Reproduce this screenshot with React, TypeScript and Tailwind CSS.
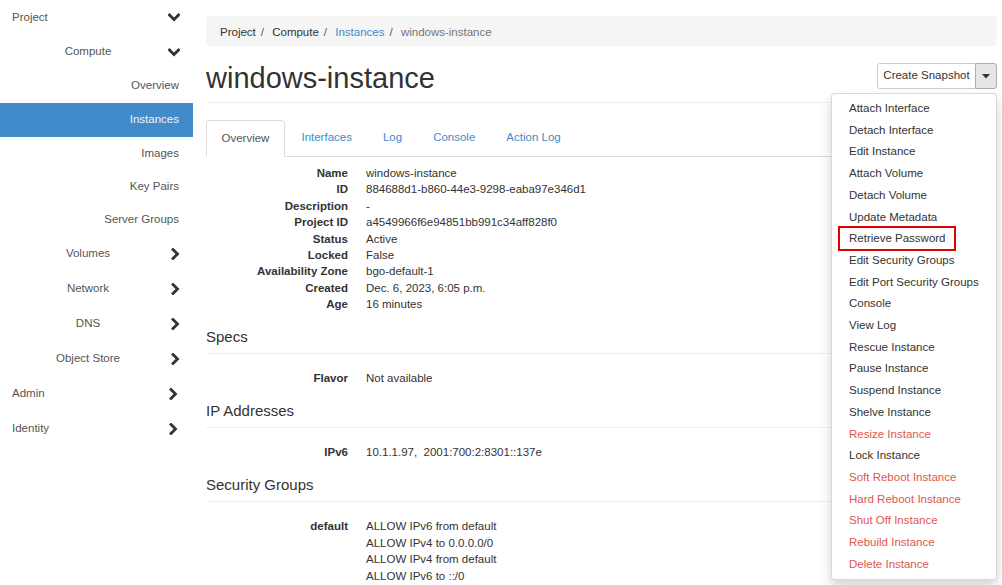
import React from "react";

const ChevDown = () => (
  <svg width="12" height="9" viewBox="0 0 12 9" className="block">
    <polyline points="1.5,2 6,6.5 10.5,2" fill="none" stroke="#333" strokeWidth="2.8" strokeLinecap="square" />
  </svg>
);
const ChevRight = () => (
  <svg width="9" height="12" viewBox="0 0 9 12" className="block">
    <polyline points="2,1.5 6.5,6 2,10.5" fill="none" stroke="#333" strokeWidth="2.8" strokeLinecap="square" />
  </svg>
);

function Sidebar() {
  const leaf = (label: string, h: string, active = false) => (
    <div
      className={`${h} flex items-center justify-end pr-[14px] ${active ? "bg-[#418bca] text-[#eef4fa]" : "text-[#555]"}`}
    >
      {label}
    </div>
  );
  const mid = (label: string, h: string, down = false) => (
    <div className={`${h} flex items-center text-[#555]`}>
      <div className="w-[176px] text-center">{label}</div>
      <div className={down ? "-ml-[8px]" : "-ml-[5px]"}>{down ? <ChevDown /> : <ChevRight />}</div>
    </div>
  );
  const top = (label: string, h: string, down = false) => (
    <div className={`${h} flex items-center justify-between pl-[12px] pr-[13px] text-[#555]`}>
      <span>{label}</span>
      {down ? <ChevDown /> : <span className="pr-[2px]"><ChevRight /></span>}
    </div>
  );
  return (
    <div className="w-[193px] shrink-0 text-[11.5px]">
      {top("Project", "h-[35px]", true)}
      {mid("Compute", "h-[34px]", true)}
      {leaf("Overview", "h-[34px]")}
      {leaf("Instances", "h-[34px]", true)}
      {leaf("Images", "h-[33px]")}
      {leaf("Key Pairs", "h-[33px]")}
      {leaf("Server Groups", "h-[33px]")}
      {mid("Volumes", "h-[35px]")}
      {mid("Network", "h-[35px]")}
      {mid("DNS", "h-[35px]")}
      {mid("Object Store", "h-[35px]")}
      {top("Admin", "h-[35px]")}
      {top("Identity", "h-[35px]")}
    </div>
  );
}

const menuItems: [string, boolean][] = [
  ["Attach Interface", false],
  ["Detach Interface", false],
  ["Edit Instance", false],
  ["Attach Volume", false],
  ["Detach Volume", false],
  ["Update Metadata", false],
  ["Retrieve Password", false],
  ["Edit Security Groups", false],
  ["Edit Port Security Groups", false],
  ["Console", false],
  ["View Log", false],
  ["Rescue Instance", false],
  ["Pause Instance", false],
  ["Suspend Instance", false],
  ["Shelve Instance", false],
  ["Resize Instance", true],
  ["Lock Instance", false],
  ["Soft Reboot Instance", true],
  ["Hard Reboot Instance", true],
  ["Shut Off Instance", true],
  ["Rebuild Instance", true],
  ["Delete Instance", true],
];

function ActionButton() {
  return (
    <div className="relative mt-[1px] flex">
      <div className="h-[26px] w-[99px] flex items-center justify-center border border-[#ccc] rounded-l-[3px] bg-white text-[11.5px] text-[#333]">
        Create Snapshot
      </div>
      <div className="h-[26px] w-[22px] -ml-px flex items-center justify-center border border-[#adadad] rounded-r-[3px] bg-[#e6e6e6]">
        <svg width="8" height="5" viewBox="0 0 8 5"><polygon points="0,0 8,0 4,4.5" fill="#333" /></svg>
      </div>
      <div className="absolute right-0 top-full mt-[4px] w-[166px] z-10 bg-white border border-[rgba(0,0,0,0.15)] rounded-[4px] shadow-[0_6px_12px_rgba(0,0,0,0.175)] py-[4px] text-[11.5px]">
        {menuItems.map(([label, danger]) => (
          <div
            key={label}
            className={`relative leading-[21.7px] px-[17px] whitespace-nowrap ${danger ? "text-[#e05650]" : "text-[#333]"}`}
          >
            {label}
            {label === "Retrieve Password" && (
              <div className="absolute left-[6px] top-[-2px] w-[118px] h-[25px] border-2 border-[#e00000]" />
            )}
          </div>
        ))}
      </div>
    </div>
  );
}

function Row({ k, v }: { k: string; v: React.ReactNode }) {
  return (
    <div className="flex leading-[16.4px]">
      <div className="w-[142px] text-right font-bold text-[#333]">{k}</div>
      <div className="ml-[18px] text-[#333]">{v}</div>
    </div>
  );
}

function Section({ title, first = false }: { title: string; first?: boolean }) {
  return (
    <div className={`${first ? "mt-[15px]" : "mt-[16px]"} text-[15px] leading-[17px] pb-[8px] border-b border-[#eee] text-[#333]`}>{title}</div>
  );
}

export default function App() {
  return (
    <div className="w-[1002px] h-[585px] overflow-hidden bg-white flex font-['Liberation_Sans',Arial,sans-serif] text-[#333]">
      <Sidebar />
      <div className="flex-1 pl-[13px] pr-[5px] text-[11.5px]">
        <div className="mt-[16px] h-[30px] pt-[3px] bg-[#f5f5f5] rounded-[4px] px-[14px] flex items-center text-[11.5px]">
          <span className="text-[#333]">Project</span>
          <span className="px-[5px] text-[#555]">/&nbsp;</span>
          <span className="text-[#333]">Compute</span>
          <span className="px-[5px] text-[#555]">/&nbsp;</span>
          <span className="text-[#428bca]">Instances</span>
          <span className="px-[5px] text-[#555]">/&nbsp;</span>
          <span className="text-[#777]">windows-instance</span>
        </div>
        <div className="flex justify-between items-start pt-[16px] pb-[7px] border-b border-[#eee]">
          <h1 className="text-[29px] leading-[33px] text-[#333]">windows-instance</h1>
          <ActionButton />
        </div>
        <div className="mt-[17px] flex border-b border-[#ddd] h-[37px]">
          <div className="-mb-px mr-[2px] px-[14.5px] flex items-center border border-[#ddd] border-b-white rounded-t-[4px] bg-white text-[#555]">
            Overview
          </div>
          {["Interfaces", "Log", "Console", "Action Log"].map((t) => (
            <div key={t} className="mr-[2px] px-[14.5px] flex items-center text-[#428bca]">
              {t}
            </div>
          ))}
        </div>
        <div className="mt-[8px]">
          <Row k="Name" v="windows-instance" />
          <Row k="ID" v="884688d1-b860-44e3-9298-eaba97e346d1" />
          <Row k="Description" v="-" />
          <Row k="Project ID" v="a4549966f6e94851bb991c34aff828f0" />
          <Row k="Status" v="Active" />
          <Row k="Locked" v="False" />
          <Row k="Availability Zone" v="bgo-default-1" />
          <Row k="Created" v="Dec. 6, 2023, 6:05 p.m." />
          <Row k="Age" v="16 minutes" />
        </div>
        <Section title="Specs" first />
        <div className="mt-[16px]">
          <Row k="Flavor" v="Not available" />
        </div>
        <Section title="IP Addresses" />
        <div className="mt-[16px]">
          <Row k="IPv6" v={<span className="whitespace-pre">10.1.1.97,  2001:700:2:8301::137e</span>} />
        </div>
        <Section title="Security Groups" />
        <div className="mt-[16px]">
          <Row
            k="default"
            v={
              <div>
                <div>ALLOW IPv6 from default</div>
                <div>ALLOW IPv4 to 0.0.0.0/0</div>
                <div>ALLOW IPv4 from default</div>
                <div>ALLOW IPv6 to ::/0</div>
              </div>
            }
          />
        </div>
      </div>
    </div>
  );
}
